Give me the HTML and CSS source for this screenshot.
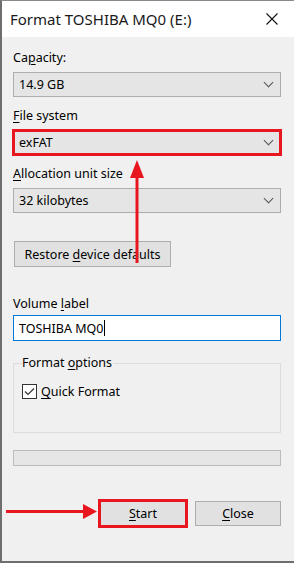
FILE: index.html
```html
<!DOCTYPE html>
<html lang="en">

<head>
    <meta charset="UTF-8">
    <meta name="viewport" content="width=device-width, initial-scale=1.0">
    <title>Format TOSHIBA MQ0 (E:)</title>
    <link rel="stylesheet" href="styles.css">
</head>

<body>
    <div class="window">
        <!--Barra de titulo-->
        <header class="titlebar">
            <span class="title">Format TOSHIBA MQ0 (E:)</span>
            <svg class="close-x" width="12" height="12" viewBox="0 0 12 12">
                <path d="M0.5 0.5 L11.5 11.5 M11.5 0.5 L0.5 11.5" stroke="#111" stroke-width="1.1" fill="none"/>
            </svg>
        </header>

        <main class="content">
            <div class="field">
                <label>Ca<u>p</u>acity:</label>
                <div class="combo"><span>14.9 GB</span><i class="chev"></i></div>
            </div>
            <div class="field">
                <label><u>F</u>ile system</label>
                <div class="combo marked"><span>exFAT</span><i class="chev"></i></div>
            </div>
            <div class="field">
                <label><u>A</u>llocation unit size</label>
                <div class="combo"><span>32 kilobytes</span><i class="chev"></i></div>
            </div>

            <button class="btn restore">Restore <u>d</u>evice defaults</button>

            <div class="field volume">
                <label>Volume <u>l</u>abel</label>
                <div class="textbox">TOSHIBA MQ0<i class="caret"></i></div>
            </div>

            <!--Opciones de formato-->
            <div class="group">
                <span class="group-title">Format <u>o</u>ptions</span>
                <div class="check-row">
                    <span class="checkbox">
                        <svg width="13" height="13" viewBox="0 0 13 13">
                            <path d="M2 6.5 L5 9.5 L11 3.5" stroke="#333" stroke-width="1.2" fill="none"/>
                        </svg>
                    </span>
                    <span><u>Q</u>uick Format</span>
                </div>
            </div>

            <div class="progress"></div>

            <div class="actions">
                <button class="btn marked-btn"><u>S</u>tart</button>
                <button class="btn"><u>C</u>lose</button>
            </div>
        </main>

        <!--Flechas rojas de anotacion-->
        <svg class="arrows" width="294" height="563" viewBox="0 0 294 563">
            <path d="M137 176 L137 263" stroke="#e8161e" stroke-width="3"/>
            <path d="M137 160 L130 178 L144 178 Z" fill="#e8161e"/>
            <path d="M6 511.5 L85 511.5" stroke="#e8161e" stroke-width="3"/>
            <path d="M97 511.5 L83 504 L83 519 Z" fill="#e8161e"/>
        </svg>
    </div>
</body>

</html>
```

FILE: styles.css
```css
* {
    box-sizing: border-box;
}

body {
    margin: 0;
    font-family: "Noto Sans", "Open Sans", sans-serif;
    font-size: 12.5px;
    color: #000;
    background-color: #fff;
}

u {
    text-decoration-thickness: 1px;
    text-underline-offset: 2px;
}

.window {
    position: relative;
    width: 294px;
    height: 563px;
    background-color: #f0f0f0;
    border-top: 1px solid #8a8a8a;
    border-left: 2px solid #6e6e6e;
    border-bottom: 2px solid #6e6e6e;
    display: flex;
    flex-direction: column;
}

.titlebar {
    height: 36px;
    background-color: #fff;
    display: flex;
    align-items: center;
    justify-content: space-between;
    padding: 0 16px 0 8px;

    .title {
        font-size: 15px;
        color: #1a1a1a;
    }
}

.content {
    padding: 12px 13px 0 11px;
    display: flex;
    flex-direction: column;
}

.field {
    display: flex;
    flex-direction: column;
    gap: 6px;
    margin-bottom: 10px;

    label {
        line-height: 17px;
        height: 17px;
    }
}

.combo {
    height: 25px;
    background-color: #e5e5e5;
    border: 1px solid #adadad;
    display: flex;
    align-items: center;
    justify-content: space-between;
    padding: 0 6px 0 5px;

    &.marked {
        outline: 3px solid #e8161e;
        outline-offset: -2px;
    }
}

.chev {
    width: 7px;
    height: 7px;
    border-right: 1px solid #555;
    border-bottom: 1px solid #555;
    transform: rotate(45deg);
    margin: -4px 2px 0 0;
}

.btn {
    font-family: inherit;
    font-size: 12.5px;
    color: #000;
    background-color: #e1e1e1;
    border: 1px solid #adadad;
    height: 25px;
    padding: 0;
}

.restore {
    align-self: flex-start;
    width: 157px;
    height: 26px;
    margin: 18px 0 0 1px;
}

.volume {
    margin-top: 28px;
    gap: 3px;
    margin-bottom: 0;
}

.textbox {
    height: 26px;
    background-color: #fff;
    border: 1px solid #0078d7;
    display: flex;
    align-items: center;
    padding-left: 5px;

    .caret {
        width: 1px;
        height: 16px;
        background-color: #000;
        margin-left: 1px;
    }
}

.group {
    margin-top: 22px;
    height: 70px;
    border: 1px solid #dcdcdc;
    padding: 0 8px;

    .group-title {
        display: block;
        width: fit-content;
        line-height: 17px;
        margin-top: -10px;
        padding: 0 1px 0 0;
        background-color: #f0f0f0;
    }
}

.check-row {
    display: flex;
    align-items: center;
    gap: 4px;
    margin-top: 12px;
}

.checkbox {
    width: 15px;
    height: 15px;
    border: 1px solid #333;
    background-color: #fff;
    display: flex;
    align-items: center;
    justify-content: center;
}

.progress {
    margin-top: 17px;
    height: 16px;
    background-color: #e6e6e6;
    border: 1px solid #bcbcbc;
}

.actions {
    margin-top: 35px;
    display: flex;
    justify-content: flex-end;
    gap: 9px;

    .btn {
        width: 86px;
    }

    .marked-btn {
        outline: 3px solid #e8161e;
        outline-offset: -1px;
    }
}

.arrows {
    position: absolute;
    top: -1px;
    left: -2px;
    pointer-events: none;
}
```
